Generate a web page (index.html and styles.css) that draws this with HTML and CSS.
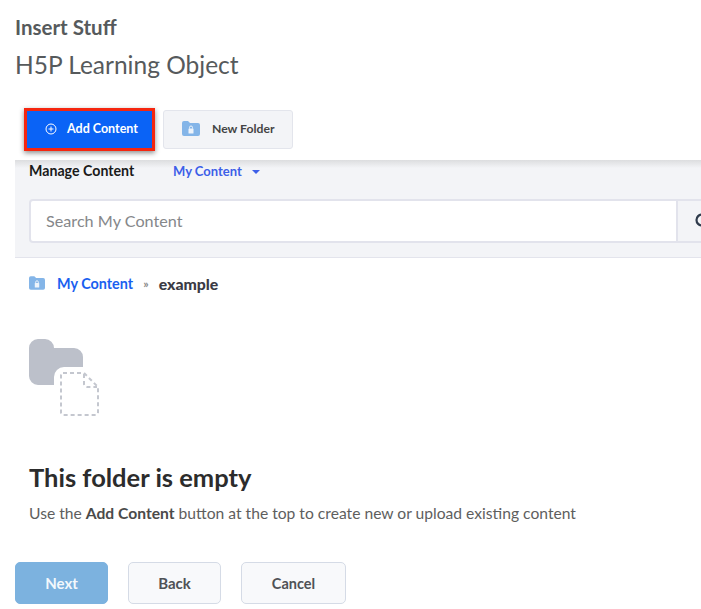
FILE: index.html
```html
<!DOCTYPE html>
<html lang="en">
<head>
<meta charset="utf-8">
<title>Insert Stuff</title>
<link rel="stylesheet" href="styles.css">
</head>
<body>
<main class="page">
  <h1 class="title">Insert Stuff</h1>
  <h2 class="subtitle">H5P Learning Object</h2>
  <div class="toolbar">
    <button class="btn-add">
      <svg class="ico-plus" viewBox="0 0 12 12" width="12" height="12"><circle cx="6" cy="6" r="5" fill="none" stroke="#fff" stroke-width="1"/><path d="M6 3.500v5M3.500 6h5" stroke="#fff" stroke-width="1"/></svg>
      <span class="btn-label">Add Content</span>
    </button>
    <button class="btn-folder">
      <svg viewBox="0 0 18 15" width="18" height="15"><path d="M0 2a2 2 0 0 1 2-2h4l2 2h8a2 2 0 0 1 2 2v9a2 2 0 0 1-2 2H2a2 2 0 0 1-2-2z" fill="#84b5e8"/><rect x="6.500" y="7.500" width="5" height="5" rx=".6" fill="#eef4fb"/><path d="M7.500 7.500v-1a1.500 1.500 0 0 1 3 0v1" fill="none" stroke="#eef4fb"/></svg>
      <span class="btn-label">New Folder</span>
    </button>
  </div>
  <section class="panel">
    <nav class="tabs">
      <span class="tab-title">Manage Content</span>
      <span class="tab-link">My Content</span>
      <span class="caret"></span>
    </nav>
    <div class="search">
      <div class="search-input">Search My Content</div>
      <div class="search-btn">
        <svg viewBox="0 0 16 16" width="16" height="16"><circle cx="7" cy="7" r="5.500" fill="none" stroke="#2f3b4c" stroke-width="2.200"/><path d="M11 11l4 4" stroke="#2f3b4c" stroke-width="2.200"/></svg>
      </div>
    </div>
  </section>
  <div class="crumbs">
    <svg viewBox="0 0 18 15" width="16" height="14"><path d="M0 2a2 2 0 0 1 2-2h4l2 2h8a2 2 0 0 1 2 2v9a2 2 0 0 1-2 2H2a2 2 0 0 1-2-2z" fill="#84b5e8"/><rect x="6.500" y="7.500" width="5" height="5" rx=".6" fill="#eef4fb"/><path d="M7.500 7.500v-1a1.500 1.500 0 0 1 3 0v1" fill="none" stroke="#eef4fb"/></svg>
    <a class="crumb-link">My Content</a>
    <span class="crumb-sep">»</span>
    <strong class="crumb-cur">example</strong>
  </div>
  <svg class="empty-art" viewBox="0 0 72 80" width="72" height="80">
    <path d="M0 9a9 9 0 0 1 9-9h7a9 9 0 0 1 9 9h20a9 9 0 0 1 9 9v10H35a10 10 0 0 0-10 10v8H9a9 9 0 0 1-9-9z" fill="#bcc0ca"/>
    <path d="M34 34h21l14 14v26a2 2 0 0 1-2 2H34a2 2 0 0 1-2-2V36a2 2 0 0 1 2-2z" fill="#fff" stroke="#c4c7cf" stroke-width="2" stroke-dasharray="4 3"/>
    <path d="M55 35v10a3 3 0 0 0 3 3h10" fill="none" stroke="#c4c7cf" stroke-width="2" stroke-dasharray="4 3"/>
  </svg>
  <h3 class="empty-title">This folder is empty</h3>
  <p class="empty-text">Use the <b>Add Content</b> button at the top to create new or upload existing content</p>
  <div class="actions">
    <button class="act act-next">Next</button>
    <button class="act act-back">Back</button>
    <button class="act act-cancel">Cancel</button>
  </div>
</main>
</body>
</html>
```
FILE: styles.css
```css
html, body { margin: 0; padding: 0; background: #fff; overflow: hidden; }
body { width: 701px; height: 609px; font-family: Lato, "Noto Sans", sans-serif; color: #555; }
.page { padding-left: 15px; display: flex; flex-direction: column; align-items: flex-start; }
.title { margin: 16px 0 0; font-size: 20.5px; line-height: 22px; font-weight: 700; color: #565a5c; }
.subtitle { margin: 12px 0 0; font-size: 24.5px; line-height: 30px; font-weight: 400; color: #565a5c; }
.toolbar { display: flex; align-items: center; gap: 8px; margin: 28px 0 0 9px; height: 43px; }
button { font-family: inherit; padding: 0; cursor: pointer; }
.btn-add { width: 131px; height: 43px; box-sizing: border-box; border: 3px solid #f5260f; background: #0a63f6; color: #fff; font-size: 12.5px; font-weight: 700; display: flex; align-items: center; justify-content: flex-start; gap: 10px; padding-left: 18px; padding-bottom: 2px; box-shadow: 0 2px 5px rgba(0,0,0,.45); }
.btn-folder { width: 130px; height: 39px; box-sizing: border-box; border: 1px solid #e3e5ec; border-radius: 3px; background: #f3f4f7; color: #444; font-size: 12.2px; font-weight: 700; display: flex; align-items: center; gap: 12px; padding-left: 18px; padding-bottom: 2px; }
.panel { width: 686px; height: 97px; margin-top: 9px; background: #f3f4f7; border-bottom: 1px solid #e3e4ec; position: relative; overflow: hidden; }
.panel::before { content: ""; position: absolute; left: 0; right: 0; top: 0; height: 8px; background: linear-gradient(#dcdddf, #f3f4f7); }
.tabs { position: relative; display: flex; align-items: center; height: 21px; padding-left: 14px; font-size: 13px; font-weight: 700; }
.tab-title { color: #1a1a1a; width: 144px; font-size: 14.2px; }
.tab-link { color: #3d5fe8; }
.caret { margin-left: 10px; margin-top: 2px; border: 4px solid transparent; border-top-color: #3d5fe8; border-bottom: 0; }
.search { display: flex; margin: 18px 0 0 14px; height: 44px; width: 700px; }
.search-input { width: 649px; box-sizing: border-box; background: #fff; border: 2px solid #e2e3ec; border-radius: 4px 0 0 4px; padding-left: 15px; font-size: 16.2px; line-height: 40px; color: #85878a; }
.search-btn { flex: 1; box-sizing: border-box; border: 2px solid #e2e3ec; border-left: 0; padding-left: 17px; display: flex; align-items: center; }
.crumbs { display: flex; align-items: center; height: 20px; margin: 15px 0 0 14px; font-size: 14.4px; font-weight: 700; }
.crumb-link { color: #1a5ff0; margin-left: 12px; }
.crumb-sep { color: #8a8a8a; margin: 0 10px; font-size: 12px; }
.crumb-cur { color: #3a3a44; font-size: 15.8px; }
.empty-art { margin: 46px 0 0 14px; display: block; }
.empty-title { margin: 43px 0 0 14px; font-size: 25.5px; line-height: 30px; font-weight: 700; color: #2c2c2c; }
.empty-text { margin: 11px 0 0 14px; font-size: 15.65px; line-height: 20px; color: #5e5e5e; }
.empty-text b { color: #4a4a4a; }
.actions { display: flex; gap: 20px; margin-top: 39px; }
.act { height: 42px; border-radius: 5px; font-size: 15px; font-weight: 700; box-sizing: border-box; }
.act-next { width: 93px; background: #7cb2df; border: 1px solid #7cb2df; color: #f3f8fc; }
.act-back { width: 93px; background: #f8f9fb; border: 1px solid #d5dbe6; color: #4f5256; }
.act-cancel { width: 105px; background: #f8f9fb; border: 1px solid #d5dbe6; color: #4f5256; font-size: 14.5px; }
```
